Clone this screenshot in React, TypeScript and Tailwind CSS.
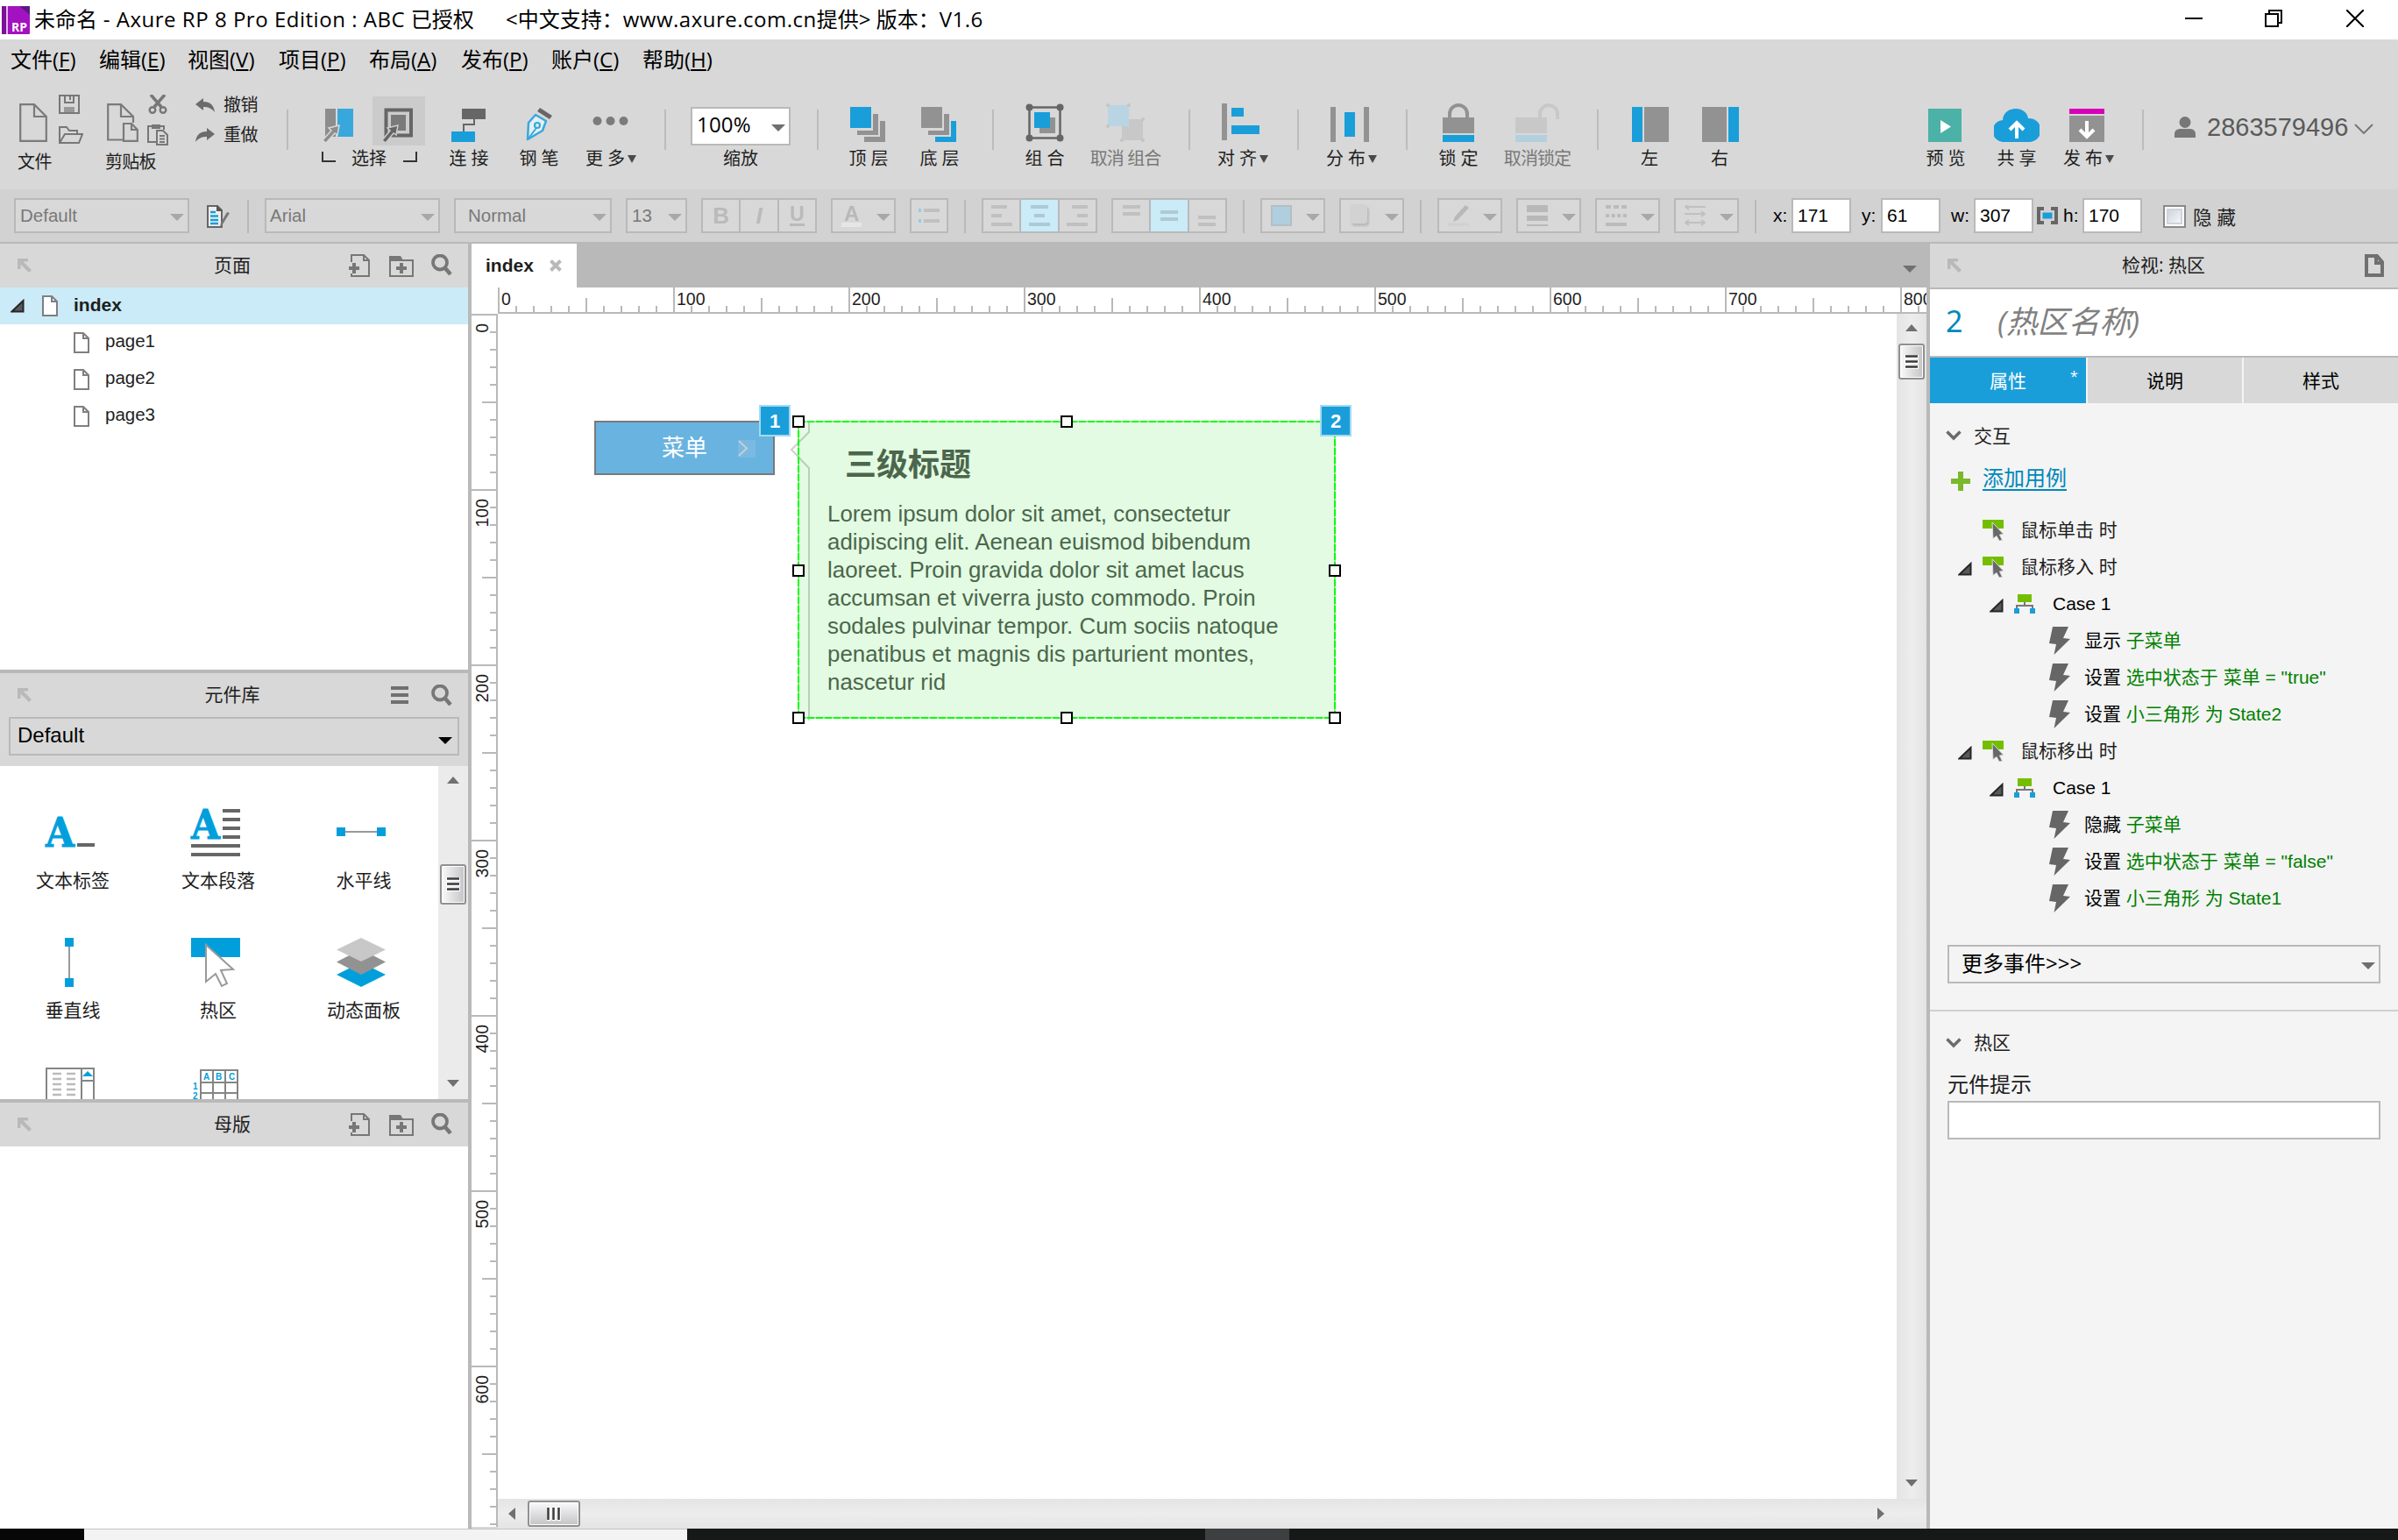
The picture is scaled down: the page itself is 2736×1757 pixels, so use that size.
import type { ReactNode } from 'react';
import clsx from 'clsx';

const LOREM = [
  'Lorem ipsum dolor sit amet, consectetur',
  'adipiscing elit. Aenean euismod bibendum',
  'laoreet. Proin gravida dolor sit amet lacus',
  'accumsan et viverra justo commodo. Proin',
  'sodales pulvinar tempor. Cum sociis natoque',
  'penatibus et magnis dis parturient montes,',
  'nascetur rid',
];

const MENUS = [
  { name: '文件', key: 'F', width: 'w-[101px]' },
  { name: '编辑', key: 'E', width: 'w-[101px]' },
  { name: '视图', key: 'V', width: 'w-[104px]' },
  { name: '项目', key: 'P', width: 'w-[103px]' },
  { name: '布局', key: 'A', width: 'w-[105px]' },
  { name: '发布', key: 'P', width: 'w-[103px]' },
  { name: '账户', key: 'C', width: 'w-[104px]' },
  { name: '帮助', key: 'H', width: 'w-[100px]' },
];

/* ---------- small shared pieces ---------- */

function Caret({ className = 'text-[#a8a8a8]' }: { className?: string }) {
  return (
    <svg className={clsx('h-2 w-4 shrink-0', className)} viewBox="0 0 16 8">
      <path d="M0 0H16L8 8Z" fill="currentColor" />
    </svg>
  );
}

function Divider({ className }: { className?: string }) {
  return <div className={clsx('mt-[30px] h-[46px] w-0.5 shrink-0 bg-[#bcbcbc]', className)} />;
}

function DownMark() {
  return (
    <svg className="mb-[3px] ml-[3px] inline-block h-[9px] w-[10px]" viewBox="0 0 10 9">
      <path d="M0 0H10L5 9Z" fill="#4a4a4a" />
    </svg>
  );
}

interface ToolProps {
  label: string;
  width: string;
  icon: ReactNode;
  disabled?: boolean;
  menu?: boolean;
}

function Tool({ label, width, icon, disabled = false, menu = false }: ToolProps) {
  return (
    <div className={clsx('flex shrink-0 flex-col items-center pt-[23px]', width)}>
      <div className="flex h-11 items-end">{icon}</div>
      <div
        className={clsx(
          'mt-1 h-[30px] text-[20px] leading-[30px] whitespace-nowrap',
          disabled ? 'tracking-[-0.9px] text-[#777]' : 'text-[#1e1e1e]'
        )}
      >
        {label}
        {menu && <DownMark />}
      </div>
    </div>
  );
}

/* ---------- icons ---------- */

function PageIcon() {
  return (
    <svg className="h-6 w-[18px] shrink-0" viewBox="0 0 18 24" fill="#fff" stroke="#7f7f7f" strokeWidth="2">
      <path d="M1 1H11L17 7V23H1Z" />
      <path d="M11 1V7H17" fill="none" />
    </svg>
  );
}

function DockIcon() {
  return (
    <svg className="h-4 w-4 shrink-0" viewBox="0 0 16 16" fill="#b9b9b9">
      <path d="M0 0H12V3.500H6.500L16 13L13 16L3.500 6.500V12H0Z" />
    </svg>
  );
}

function AddPageIcon() {
  return (
    <svg className="h-[26px] w-6" viewBox="0 0 24 26" fill="none" stroke="#777" strokeWidth="2">
      <path d="M3 9V1H17L23 7V25H3V22" />
      <path d="M17 1V7H23" />
      <path d="M0 16H12M6 10V22" strokeWidth="4" />
    </svg>
  );
}

function AddFolderIcon() {
  return (
    <svg className="h-6 w-7" viewBox="0 0 28 24" fill="none" stroke="#777" strokeWidth="2">
      <path d="M1 5H27V23H1Z" />
      <path d="M0 0H13L16 5H0Z" fill="#777" stroke="none" />
      <path d="M8 14H20M14 8V20" strokeWidth="4" />
    </svg>
  );
}

function SearchIcon() {
  return (
    <svg className="h-6 w-6" viewBox="0 0 24 24" fill="none" stroke="#777">
      <circle cx="10" cy="9.500" r="8" strokeWidth="3.800" />
      <path d="M15.500 15.500L22 23" strokeWidth="4.500" />
    </svg>
  );
}

function TreeArrow() {
  return (
    <svg className="h-4 w-4 shrink-0" viewBox="0 0 16 16">
      <path d="M1.500 14.500H14.500V2Z" fill="#595959" stroke="#262626" strokeWidth="2" />
    </svg>
  );
}

function ChevronIcon() {
  return (
    <svg className="h-3 w-[18px] shrink-0" viewBox="0 0 18 12" fill="none" stroke="#6b6b6f" strokeWidth="3.500">
      <path d="M1.500 1.500L9 9L16.500 1.500" />
    </svg>
  );
}

function BoltIcon() {
  return (
    <svg className="h-8 w-6 shrink-0" viewBox="0 0 24 32" fill="#666">
      <path d="M4 0H22L16 13L24 14L5.500 32L8 20L0 19Z" />
    </svg>
  );
}

function EventIcon() {
  return (
    <svg className="h-6 w-6 shrink-0" viewBox="0 0 24 24">
      <path d="M0 0H24V10H0Z" fill="#74be00" />
      <path d="M11 3L24 16.500L19.500 17L22.500 23.500L19 24L16 18.500L12 21.500Z" fill="#686868" stroke="#ddd" strokeWidth="1" />
    </svg>
  );
}

function CaseIcon() {
  return (
    <svg className="h-[22px] w-6 shrink-0" viewBox="0 0 24 22">
      <path d="M12 8V13M3 17V13H21V17" fill="none" stroke="#777" strokeWidth="2" />
      <path d="M4 0H20V9H4Z" fill="#74be00" />
      <path d="M0 16H6V22H0ZM18 16H24V22H18Z" fill="#1a9ed9" />
    </svg>
  );
}

/* ---------- title and menu ---------- */

function TitleBar() {
  return (
    <div className="flex h-[45px] items-center bg-white text-[24px] whitespace-pre text-black">
      <svg className="ml-0.5 h-8 w-8 shrink-0" viewBox="0 0 32 32">
        <rect width="32" height="32" rx="1" fill="#a312c0" />
        <path d="M0 0H5V32H0Z" fill="#7a1296" />
        <path d="M5 0H7V32H5Z" fill="#e7b9f0" />
        <path d="M20 0H32V10Z" fill="#5a1a86" />
        <text x="11" y="28.500" fontSize="15" fontWeight="bold" fill="#fff" fontFamily="Open Sans" textLength="18" lengthAdjust="spacingAndGlyphs">
          RP
        </text>
      </svg>
      <span className="ml-[5px] w-[538px] shrink-0 pb-px">
        未命名<span className="tracking-[0.52px]"> - Axure RP 8 Pro Edition : ABC </span>已授权
      </span>
      <span className="pb-px">
        {'<中文支持：'}
        <span className="tracking-[0.5px]">www.axure.com.cn</span>
        {'提供> 版本：'}
        <span className="tracking-[0.5px]">V1.6</span>
      </span>
      <div className="mr-[39px] mb-1 ml-auto flex items-center">
        <svg className="h-5 w-5" viewBox="0 0 20 20">
          <path d="M0 10H20" stroke="#000" strokeWidth="2" />
        </svg>
        <svg className="ml-[71px] h-5 w-5" viewBox="0 0 20 20" fill="none" stroke="#000" strokeWidth="2">
          <path d="M1 5H15V19H1Z M5 5V1H19V15H15" />
        </svg>
        <svg className="ml-[73px] h-5 w-5" viewBox="0 0 20 20" fill="none" stroke="#000" strokeWidth="2">
          <path d="M0 0L20 20M20 0L0 20" />
        </svg>
      </div>
    </div>
  );
}

function MenuBar() {
  return (
    <div className="flex h-[50px] pl-3 text-[24px] leading-[45px] text-black">
      {MENUS.map((m) => (
        <div key={m.name} className={clsx('shrink-0 whitespace-nowrap', m.width)}>
          {m.name}(<span className="underline underline-offset-2">{m.key}</span>)
        </div>
      ))}
    </div>
  );
}

/* ---------- main toolbar ---------- */

function FileTools() {
  return (
    <>
      <div className="ml-5 w-[100px] shrink-0 pt-[13px]">
        <div className="flex h-[62px]">
          <svg className="mt-[10px] ml-0.5 h-11 w-8" viewBox="0 0 32 44" fill="none" stroke="#7b7b7b" strokeWidth="2.200">
            <path d="M1.200 1.200H17L30.800 15V42.800H1.200Z M17 1.200V15H30.800" />
          </svg>
          <div className="ml-[13px] flex flex-col">
            <svg className="h-[22px] w-6" viewBox="0 0 24 22" fill="none" stroke="#777" strokeWidth="2">
              <path d="M1 1H23V21H1Z M7 1V9H17V1 M13 1V6" />
              <path d="M6 14H18V20H6Z" fill="#999" stroke="none" />
            </svg>
            <svg className="mt-[14px] h-5 w-7" viewBox="0 0 28 20" fill="none" stroke="#777" strokeWidth="2">
              <path d="M1 19V1H9L12 5H21V9 M1 19L7 9H27L23 19Z" />
            </svg>
          </div>
        </div>
        <div className="h-[30px] text-[20px] leading-[30px] tracking-[-0.5px]">文件</div>
      </div>
      <div className="w-[103px] shrink-0 pt-[13px]">
        <div className="flex h-[62px]">
          <svg className="mt-[10px] ml-0.5 h-11 w-9" viewBox="0 0 36 44" fill="none" stroke="#7b7b7b" strokeWidth="2.200">
            <path d="M18 41.500H1.200V1.200H16L30 15V22 M16 1.200V15H30" />
            <path d="M19 23H28L34.800 30V42.800H19Z M28 23V30H34.800" />
          </svg>
          <div className="ml-[10px] flex flex-col">
            <svg className="ml-px h-[22px] w-[22px]" viewBox="0 0 22 22" fill="none" stroke="#777">
              <path d="M3 0L15 14M19 0L7 14" strokeWidth="3.500" />
              <circle cx="5" cy="17.500" r="3.300" strokeWidth="2.400" />
              <circle cx="17" cy="17.500" r="3.300" strokeWidth="2.400" />
            </svg>
            <svg className="mt-3 h-6 w-6" viewBox="0 0 24 24" fill="none" stroke="#777" strokeWidth="2">
              <path d="M10 20H1V2H19V6 M6 1H14V4H6Z" />
              <path d="M11 7H18L23 12V23H11Z M14 13H20M14 16.500H20M14 20H20" />
            </svg>
          </div>
        </div>
        <div className="h-[30px] text-[20px] leading-[30px] tracking-[-0.7px]">剪贴板</div>
      </div>
      <div className="w-[103px] shrink-0 pt-[10px] text-[20px] leading-[30px] tracking-[-0.6px]">
        <div className="flex h-[30px] items-center">
          <svg className="h-4 w-[22px]" viewBox="0 0 22 16" fill="#6b6b6b">
            <path d="M0 7L9 0V4C17 4 21 8 22 16C18 11 14 10 9 10V14Z" />
          </svg>
          <span className="ml-[10px]">撤销</span>
        </div>
        <div className="mt-1 flex h-[30px] items-center">
          <svg className="h-4 w-[22px]" viewBox="0 0 22 16" fill="#6b6b6b">
            <path d="M22 7L13 0V4C5 4 1 8 0 16C4 11 8 10 13 10V14Z" />
          </svg>
          <span className="ml-[10px]">重做</span>
        </div>
      </div>
    </>
  );
}

function SelectTools() {
  return (
    <div className="ml-[38px] w-[118px] shrink-0 pt-[15px]">
      <div className="flex h-14">
        <svg className="mt-[13px] h-10 w-9" viewBox="0 0 36 40">
          <path d="M4 1H16V33H4Z" fill="#8c8c8c" />
          <path d="M18 1H36V33H18Z" fill="#38a8dc" />
          <path d="M20 20L18 31L15 29L5 40L1 37L11 26L8 23Z" fill="#8c8c8c" stroke="#d8d8d8" strokeWidth="1.500" />
        </svg>
        <div className="ml-[22px] flex h-14 w-[60px] bg-[#cbcbcb]">
          <svg className="mt-[13px] ml-[10px] h-10 w-9" viewBox="0 0 36 40">
            <path d="M5.500 2.500H34V31.500H5.500Z" fill="none" stroke="#666" strokeWidth="4" />
            <path d="M11 8H28V26H11Z" fill="#7a7a7a" />
            <path d="M19 20L17 31L14 29L5 40L1 37L10 26L7 23Z" fill="#666" stroke="#cbcbcb" strokeWidth="1.500" />
          </svg>
        </div>
      </div>
      <div className="flex h-[30px] text-[20px] leading-[30px]">
        <div className="mt-[7px] h-3 w-4 border-b-2 border-l-2 border-[#333]" />
        <span className="ml-[18px] w-[59px]">选择</span>
        <div className="mt-[7px] h-3 w-4 border-r-2 border-b-2 border-[#333]" />
      </div>
    </div>
  );
}

function Toolbar() {
  return (
    <div className="flex h-[121px] text-[#1e1e1e]">
      <FileTools />
      <Divider className="ml-px" />
      <SelectTools />
      <Tool
        width="ml-[10px] w-20"
        label="连 接"
        icon={
          <svg className="h-10 w-10" viewBox="0 0 40 40">
            <path d="M26 12V20H14V28" fill="none" stroke="#666" strokeWidth="2" />
            <path d="M12 2H39V14H12Z" fill="#666" />
            <path d="M0 28H27V40H0Z" fill="#1a9ed9" />
          </svg>
        }
      />
      <Tool
        width="w-20"
        label="钢 笔"
        icon={
          <svg className="mb-px h-10 w-8" viewBox="0 0 32 40">
            <path d="M17 2L31 11L28 15L14 6Z" fill="#666" />
            <path d="M3 38L4 19L12 10L24 17L20 28Z" fill="#e4eff4" stroke="#38a8dc" strokeWidth="2.500" strokeLinejoin="round" />
            <path d="M3 38L13 25" stroke="#38a8dc" strokeWidth="2" />
            <circle cx="14" cy="22" r="3" fill="none" stroke="#38a8dc" strokeWidth="2.200" />
          </svg>
        }
      />
      <Tool
        width="w-[84px]"
        label="更 多"
        menu
        icon={
          <svg className="mb-[18px] h-3 w-[42px]" viewBox="0 0 42 12" fill="#7b7b7b">
            <circle cx="5.500" cy="6" r="5" />
            <circle cx="20.500" cy="6" r="5" />
            <circle cx="35.500" cy="6" r="5" />
          </svg>
        }
      />
      <Divider className="ml-[19px]" />
      <div className="ml-7 flex w-[114px] shrink-0 flex-col items-center pt-[27px]">
        <div className="flex h-11 w-full items-center justify-between border-2 border-[#b9b9b9] bg-white pr-1 pl-[5px] text-[24px] text-black">
          <span className="pb-1 tracking-[0.2px]">100%</span>
          <Caret className="mt-1 text-[#6f6f6f]" />
        </div>
        <div className="h-[30px] text-[20px] leading-[30px]">缩放</div>
      </div>
      <Divider className="ml-[30px]" />
      <Tool
        width="ml-4 w-[82px]"
        label="顶 层"
        icon={
          <svg className="mr-0.5 h-10 w-10" viewBox="0 0 40 40" fill="#929292">
            <path d="M26 8H32V32H8V27H26Z M34 16H40V40H16V34H34Z" />
            <path d="M0 0H24V24H0Z" fill="#1a9ed9" />
          </svg>
        }
      />
      <Tool
        width="w-20"
        label="底 层"
        icon={
          <svg className="mr-0.5 h-10 w-10" viewBox="0 0 40 40" fill="#929292">
            <path d="M26 8H32V32H8V27H26Z M0 0H24V24H0Z" />
            <path d="M34 16H40V40H16V34H34Z" fill="#1a9ed9" />
          </svg>
        }
      />
      <Divider className="ml-5" />
      <Tool
        width="ml-[18px] w-20"
        label="组 合"
        icon={
          <svg className="h-11 w-11" viewBox="0 0 44 44">
            <path d="M16 16H34V34H16Z" fill="#929292" />
            <path d="M10 10H28V28H10Z" fill="#1a9ed9" />
            <path d="M4.500 4.500H39.500V39.500H4.500Z" fill="none" stroke="#666" strokeWidth="2.500" />
            <g fill="#666">
              <circle cx="4.500" cy="4.500" r="4" />
              <circle cx="39.500" cy="4.500" r="4" />
              <circle cx="4.500" cy="39.500" r="4" />
              <circle cx="39.500" cy="39.500" r="4" />
            </g>
          </svg>
        }
      />
      <Tool
        width="ml-0.5 w-[100px]"
        label="取消 组合"
        disabled
        icon={
          <svg className="h-11 w-11" viewBox="0 0 44 44">
            <path d="M18 18H42V42H18Z" fill="#c8c8c8" />
            <path d="M2 2H26V26H2Z" fill="#b9d5e3" />
            <g fill="#c5c5c5">
              <circle cx="2" cy="2" r="2" />
              <circle cx="26" cy="2" r="2" />
              <circle cx="2" cy="26" r="2" />
              <circle cx="42" cy="18" r="2" />
              <circle cx="18" cy="42" r="2" />
              <circle cx="42" cy="42" r="2" />
            </g>
          </svg>
        }
      />
      <Divider className="ml-[22px]" />
      <Tool
        width="ml-5 w-20"
        label="对 齐"
        menu
        icon={
          <svg className="mb-0.5 ml-[-6px] h-[42px] w-[43px]" viewBox="0 0 43 42">
            <path d="M0 0H6V42H0Z" fill="#929292" />
            <path d="M11 5H25V15H11Z M11 25H43V35H11Z" fill="#1a9ed9" />
          </svg>
        }
      />
      <Divider className="ml-[22px]" />
      <Tool
        width="ml-5 w-20"
        label="分 布"
        menu
        icon={
          <svg className="mr-1 h-10 w-11" viewBox="0 0 44 40">
            <path d="M0 0H6V40H0Z M38 0H44V40H38Z" fill="#929292" />
            <path d="M16 6H28V34H16Z" fill="#1a9ed9" />
          </svg>
        }
      />
      <Divider className="ml-[22px]" />
      <Tool
        width="ml-[18px] w-20"
        label="锁 定"
        icon={
          <svg className="h-11 w-9" viewBox="0 0 36 44">
            <path d="M8 18V12A10 10 0 0 1 28 12V18" fill="none" stroke="#929292" strokeWidth="4" />
            <path d="M0 16H36V34H0Z" fill="#929292" />
            <path d="M0 36H36V44H0Z" fill="#1a9ed9" />
          </svg>
        }
      />
      <Tool
        width="w-[100px]"
        label="取消锁定"
        disabled
        icon={
          <svg className="h-11 w-[51px]" viewBox="0 0 51 44">
            <path d="M28 18V12A10 10 0 0 1 48 12V18" fill="none" stroke="#c8c8c8" strokeWidth="4" />
            <path d="M0 16H36V34H0Z" fill="#c8c8c8" />
            <path d="M0 36H36V44H0Z" fill="#b3d0de" />
          </svg>
        }
      />
      <Divider className="ml-[18px]" />
      <Tool
        width="ml-[18px] w-20"
        label="左"
        icon={
          <svg className="ml-0.5 h-10 w-[42px]" viewBox="0 0 42 40">
            <path d="M0 0H12V40H0Z" fill="#1a9ed9" />
            <path d="M14 0H42V40H14Z" fill="#929292" />
          </svg>
        }
      />
      <Tool
        width="w-20"
        label="右"
        icon={
          <svg className="ml-0.5 h-10 w-[42px]" viewBox="0 0 42 40">
            <path d="M0 0H28V40H0Z" fill="#929292" />
            <path d="M30 0H42V40H30Z" fill="#1a9ed9" />
          </svg>
        }
      />
      <Tool
        width="ml-[178px] w-20"
        label="预 览"
        icon={
          <svg className="mr-0.5 h-[38px] w-[38px]" viewBox="0 0 38 38">
            <path d="M0 0H38V38H0Z" fill="#4cb1a6" />
            <path d="M14 13V28L26 20.500Z" fill="#fff" />
          </svg>
        }
      />
      <Tool
        width="w-[82px]"
        label="共 享"
        icon={
          <svg className="h-[38px] w-[52px]" viewBox="0 0 52 38">
            <path
              d="M12 38A12.500 12.500 0 0 1 10 13C11 -4 37 -4 39 11A13.500 13.500 0 0 1 41 38Z"
              fill="#1a9ed9"
            />
            <path d="M26 34V17M18 24L26 16L34 24" fill="none" stroke="#fff" strokeWidth="4" />
          </svg>
        }
      />
      <Tool
        width="w-[82px]"
        label="发 布"
        menu
        icon={
          <svg className="mr-1 h-[38px] w-10" viewBox="0 0 40 38">
            <path d="M0 0H40V6H0Z" fill="#d600b8" />
            <path d="M0 8H40V38H0Z" fill="#929292" />
            <path d="M20 14V32M12 24L20 32L28 24" fill="none" stroke="#fff" strokeWidth="4" />
          </svg>
        }
      />
      <Divider className="ml-5" />
      <div className="ml-[35px] flex h-[100px] shrink-0 items-center text-[#5a5a5a]">
        <svg className="h-6 w-6" viewBox="0 0 24 24" fill="#777">
          <ellipse cx="12" cy="6.500" rx="6.500" ry="6.500" />
          <path d="M0 24V20C0 16 3 14 7 14H17C21 14 24 16 24 20V24Z" />
        </svg>
        <span className="ml-[13px] w-[167px] pt-0.5 font-['Liberation_Sans'] text-[29px]">2863579496</span>
        <svg className="mt-1 ml-px h-3 w-[22px]" viewBox="0 0 22 12" fill="none" stroke="#777" strokeWidth="2">
          <path d="M1 1L11 11L21 1" />
        </svg>
      </div>
    </div>
  );
}

/* ---------- format bar ---------- */

interface ComboProps {
  className: string;
  children: ReactNode;
}

function Combo({ className, children }: ComboProps) {
  return (
    <div
      className={clsx(
        'flex h-10 shrink-0 items-center justify-between border-2 border-[#b9b9b9] bg-[#d8d8d8] pr-1 text-[20.500px] text-[#787878]',
        className
      )}
    >
      {children}
      <Caret className="mt-[3px] text-[#a8a8a8]" />
    </div>
  );
}

function FormatDivider({ className }: { className?: string }) {
  return <div className={clsx('mt-0.5 h-[38px] w-0.5 shrink-0 bg-[#b9b9b9]', className)} />;
}

function ButtonGroup({ items, active, className }: { items: ReactNode[]; active?: number; className: string }) {
  return (
    <div className={clsx('flex h-10 w-[132px] shrink-0 divide-x-2 divide-[#b9b9b9] border-2 border-[#b9b9b9]', className)}>
      {items.map((item, i) => (
        <div
          key={i}
          className={clsx(
            'flex flex-1 items-center justify-center border-[#b9b9b9]',
            i === active ? 'bg-[#caebf8]' : 'bg-[#d8d8d8]'
          )}
        >
          {item}
        </div>
      ))}
    </div>
  );
}

function Bars({ d, className = 'text-[#c0c0c0]' }: { d: string; className?: string }) {
  return (
    <svg className={clsx('h-6 w-6', className)} viewBox="0 0 24 24">
      <path d={d} fill="none" stroke="currentColor" strokeWidth="4" />
    </svg>
  );
}

function Coordinate({ label, value, className }: { label: string; value: string; className: string }) {
  return (
    <div className={clsx('flex shrink-0 items-center text-[21px] text-black', className)}>
      <span className="flex-1">{label}</span>
      <div className="flex h-10 w-[68px] items-center border-2 border-[#b9b9b9] bg-white pl-[5px]">{value}</div>
    </div>
  );
}

function FormatBar() {
  return (
    <div className="flex h-[62px] border-b-2 border-[#b9b9b9] bg-[#d2d2d2] pt-[10px] font-['Liberation_Sans','Noto_Sans_CJK_SC',sans-serif]">
      <Combo className="ml-4 w-[200px] pl-[5px]">Default</Combo>
      <svg className="mt-2 ml-5 h-[26px] w-7 shrink-0" viewBox="0 0 28 26">
        <path d="M1 1H12L17 6V25H1Z" fill="#eee" stroke="#666" strokeWidth="2" />
        <path d="M11 0L18 7H11Z" fill="#555" />
        <path d="M4 8H10M4 12.500H13M4 17H13M4 21H13" stroke="#1a9ed9" strokeWidth="2.500" />
        <path d="M26 9L18 22L15 25L16 20L23 8Z" fill="#777" />
      </svg>
      <FormatDivider className="ml-[18px]" />
      <Combo className="ml-[18px] w-[200px] pl-1">Arial</Combo>
      <Combo className="ml-4 w-[180px] pl-[14px]">Normal</Combo>
      <Combo className="ml-4 w-[70px] pl-[5px]">13</Combo>
      <ButtonGroup
        className="ml-4"
        items={[
          <span className="text-[26px] font-bold text-[#bababa]">B</span>,
          <span className="text-[26px] font-bold text-[#bababa] italic">I</span>,
          <span className="border-b-[3px] border-[#bababa] text-[23px] leading-[21px] font-bold text-[#bababa]">U</span>,
        ]}
      />
      <Combo className="ml-4 w-[74px] pl-[10px]">
        <span className="border-b-[5px] border-[#e6e6e6] px-[3px] text-[24px] leading-[20px] font-bold text-[#b8b8b8]">A</span>
      </Combo>
      <div className="ml-4 flex h-10 w-11 shrink-0 items-center justify-center border-2 border-[#b9b9b9] bg-[#d8d8d8]">
        <svg className="h-6 w-6" viewBox="0 0 24 24" strokeWidth="4">
          <path d="M0 6H3M0 18H3" stroke="#93cbe6" />
          <path d="M6 6H24M6 18H24" stroke="#c0c0c0" />
        </svg>
      </div>
      <FormatDivider className="ml-[18px]" />
      <ButtonGroup
        className="ml-[18px]"
        active={1}
        items={[
          <Bars d="M0 2H18M0 12H12M0 22H24" />,
          <Bars d="M2 2H22M6 12H18M0 22H24" className="text-[#afc9d4]" />,
          <Bars d="M6 2H24M12 12H24M0 22H24" />,
        ]}
      />
      <ButtonGroup
        className="ml-4"
        active={1}
        items={[
          <Bars d="M2 2H22M2 10H22" />,
          <Bars d="M2 8H22M2 16H22" className="text-[#afc9d4]" />,
          <Bars d="M2 14H22M2 22H22" />,
        ]}
      />
      <FormatDivider className="ml-[18px]" />
      <Combo className="ml-[18px] w-[74px] pl-[10px]">
        <div className="h-6 w-6 border-2 border-[#b3bfc5] bg-[#b0cfde]" />
      </Combo>
      <Combo className="ml-4 w-[74px] pl-[10px]">
        <div className="mb-1 h-[22px] w-5 rounded-sm bg-[#d2d2d2] shadow-[2px_3px_2px_#bcbcbc]" />
      </Combo>
      <FormatDivider className="ml-[18px]" />
      <Combo className="ml-[18px] w-[74px] pl-[10px]">
        <svg className="h-6 w-6" viewBox="0 0 24 24">
          <path d="M20 0L24 3L11 17L6 19L8 13Z" fill="#b8b8b8" />
          <path d="M0 22H24" stroke="#d0d0d0" strokeWidth="3" />
        </svg>
      </Combo>
      <Combo className="ml-4 w-[74px] pl-[10px]">
        <svg className="h-6 w-6" viewBox="0 0 24 24" fill="#b8b8b8">
          <path d="M0 0H24V8H0Z M0 12H24V18H0Z M0 22H24V24H0Z" />
        </svg>
      </Combo>
      <Combo className="ml-4 w-[74px] pl-[10px]">
        <svg className="h-6 w-6" viewBox="0 0 24 24" stroke="#bbb" strokeWidth="4">
          <path d="M0 2H24" strokeDasharray="6 3" />
          <path d="M0 12H24" strokeDasharray="4 2.600" />
          <path d="M0 22H24" />
        </svg>
      </Combo>
      <Combo className="ml-4 w-[74px] pl-[10px]">
        <svg className="h-6 w-6" viewBox="0 0 24 24" fill="none" stroke="#c0c0c0" strokeWidth="2">
          <path d="M1 2H24M5 -1L1 2L5 5 M0 10H23M19 7L23 10L19 13 M2 20H22M5 17L1 20L5 23M19 17L23 20L19 23" />
        </svg>
      </Combo>
      <FormatDivider className="ml-[18px]" />
      <Coordinate label="x:" value="171" className="-mt-[10px] ml-[19px] w-[89px]" />
      <Coordinate label="y:" value="61" className="-mt-[10px] ml-3 w-[90px]" />
      <Coordinate label="w:" value="307" className="-mt-[10px] ml-3 w-[94px]" />
      <svg className="mt-[10px] ml-1 h-5 w-6 shrink-0" viewBox="0 0 24 20">
        <path d="M8 2H2V18H8M16 2H22V18H16" fill="none" stroke="#666" strokeWidth="4" />
        <path d="M6 6H18V14H6Z" fill="#1a9ed9" stroke="#d2d2d2" />
      </svg>
      <Coordinate label="h:" value="170" className="-mt-[10px] ml-[6px] w-[90px]" />
      <div className="mt-2 ml-6 h-[26px] w-[26px] shrink-0 border-2 border-[#8a8a8a] bg-white p-0.5">
        <div className="h-full w-full border-2 border-[#cfd3da] bg-gradient-to-br from-[#cfd4de] to-[#f5f6f8]" />
      </div>
      <span className="mt-2 ml-2 text-[21.500px] leading-[30px] whitespace-nowrap text-[#1e1e1e]">隐 藏</span>
    </div>
  );
}

/* ---------- left side panels ---------- */

function PanelHeader({ title, children }: { title: string; children: ReactNode }) {
  return (
    <div className="grid h-[50px] shrink-0 grid-cols-[1fr_auto_1fr] items-center bg-[#d8d8d8] pr-[18px] pl-5">
      <DockIcon />
      <span className="mr-[6px] pb-0.5 text-[21px] leading-[30px] text-[#1e1e1e]">{title}</span>
      <div className="flex items-center justify-end">{children}</div>
    </div>
  );
}

function PageActions() {
  return (
    <div className="flex items-end gap-[22px]">
      <AddPageIcon />
      <AddFolderIcon />
      <div className="-ml-0.5 pb-0.5">
        <SearchIcon />
      </div>
    </div>
  );
}

function PagesPanel() {
  return (
    <div className="flex h-[490px] shrink-0 flex-col border-b-4 border-[#b9b9b9] bg-white">
      <PanelHeader title="页面">
        <PageActions />
      </PanelHeader>
      <div className="flex h-[42px] items-center bg-[#caebf7] pl-3 font-['Liberation_Sans'] text-[21px] text-[#1e1e1e]">
        <TreeArrow />
        <div className="ml-5">
          <PageIcon />
        </div>
        <span className="ml-[18px] pb-[3px] font-bold">index</span>
      </div>
      {['page1', 'page2', 'page3'].map((page) => (
        <div key={page} className="flex h-[42px] items-center pl-[84px] font-['Liberation_Sans'] text-[20.500px] text-[#1e1e1e]">
          <PageIcon />
          <span className="ml-[18px] pb-[3px]">{page}</span>
        </div>
      ))}
    </div>
  );
}

function ScrollGrip({ vertical = false, className }: { vertical?: boolean; className?: string }) {
  return (
    <div
      className={clsx(
        'flex items-center justify-center rounded-[3px] border-2 border-[#909090] ring-1 ring-white ring-inset',
        vertical
          ? 'w-[30px] bg-gradient-to-r from-[#fafafa] to-[#c4c4c8]'
          : 'h-[30px] bg-gradient-to-b from-[#fafafa] to-[#c4c4c8]',
        className
      )}
    >
      <svg className={clsx('h-4 w-4', vertical && 'rotate-90')} viewBox="0 0 16 16">
        <path d="M2 0V16M8 0V16M14 0V16" stroke="#fff" strokeWidth="5" />
        <path d="M1.500 1V15M7.500 1V15M13.500 1V15" stroke="#3a3a3a" strokeWidth="2.500" />
      </svg>
    </div>
  );
}

function ScrollArrow({ className }: { className: string }) {
  return (
    <svg className={clsx('h-2 w-[14px]', className)} viewBox="0 0 14 8">
      <path d="M0 0H14L7 8Z" fill="#707070" />
    </svg>
  );
}

interface WidgetProps {
  label?: string;
  children: ReactNode;
}

function Widget({ label, children }: WidgetProps) {
  return (
    <div className="flex h-[148px] w-[166px] flex-col items-center">
      <svg className="mr-[6px] h-14 w-14 overflow-visible" viewBox="0 0 56 56">
        {children}
      </svg>
      <span className="mt-[11px] text-[21px] leading-[30px] whitespace-nowrap text-[#1e1e1e]">{label}</span>
    </div>
  );
}

// Heavy serif capital of the two text widgets
function LetterA({ y }: { y: number }) {
  return (
    <text
      x="0"
      y={y}
      fontSize="46"
      fontWeight="bold"
      fontFamily="DejaVu Serif"
      fill="#009fdc"
      stroke="#009fdc"
      strokeWidth="1"
      textLength="33"
      lengthAdjust="spacingAndGlyphs"
    >
      A
    </text>
  );
}

function LibraryPanel() {
  return (
    <div className="flex h-[490px] shrink-0 flex-col overflow-hidden border-b-4 border-[#b9b9b9] bg-white">
      <PanelHeader title="元件库">
        <svg className="h-5 w-5" viewBox="0 0 20 20">
          <path d="M0 2H20M0 10H20M0 18H20" stroke="#707070" strokeWidth="4" />
        </svg>
        <div className="ml-[26px]">
          <SearchIcon />
        </div>
      </PanelHeader>
      <div className="h-14 shrink-0 bg-[#d8d8d8] px-[10px]">
        <div className="flex h-11 items-center justify-between border-2 border-[#b9b9b9] pr-[6px] pl-2 font-['Liberation_Sans'] text-[24px] text-black">
          <span className="pb-[3px]">Default</span>
          <Caret className="mt-[9px] text-black" />
        </div>
      </div>
      <div className="flex h-[380px] shrink-0">
        <div className="flex w-[500px] flex-wrap content-start overflow-hidden pt-12">
          <Widget label="文本标签">
            <LetterA y={44} />
            <path d="M36 42H56" stroke="#666" strokeWidth="4" />
          </Widget>
          <Widget label="文本段落">
            <LetterA y={35} />
            <path d="M36 3H56M36 13H56M36 23H56M36 33H56M0 43H56M0 53H56" stroke="#666" strokeWidth="3.800" />
          </Widget>
          <Widget label="水平线">
            <path d="M5 27H51" stroke="#999" strokeWidth="2" />
            <path d="M0 22H10V32H0Z M46 22H56V32H46Z" fill="#009fdc" />
          </Widget>
          <Widget label="垂直线">
            <path d="M27 5V51" stroke="#999" strokeWidth="2" />
            <path d="M22 0H32V10H22Z M22 46H32V56H22Z" fill="#009fdc" />
          </Widget>
          <Widget label="热区">
            <path d="M0 0H56V22H0Z" fill="#009fdc" />
            <path d="M17 8L48 36L34 37L41 52L35 55L28 41L17 50Z" fill="#fff" stroke="#999" strokeWidth="2" />
          </Widget>
          <Widget label="动态面板">
            <path d="M28 28L56 42L28 56L0 42Z" fill="#009fdc" />
            <path d="M28 13L56 27.500L28 42L0 27.500Z" fill="#929292" />
            <path d="M28 0L56 13.500L28 27L0 13.500Z" fill="#c8c8c8" />
          </Widget>
          <Widget>
            <path d="M1 1H55V60H1Z M41 1V60M41 15H55" fill="#fff" stroke="#858585" strokeWidth="2" />
            <path d="M8 7H18M24 7H34M8 13H18M24 13H34M8 19H18M24 19H34M8 25H18M24 25H34M8 31H18M24 31H34" stroke="#bbb" strokeWidth="2.500" />
            <path d="M42 10L48 4L54 10Z" fill="#009fdc" />
          </Widget>
          <Widget>
            <path d="M11 3H53V60H11Z M25 3V60M39 3V60M11 17H53M11 29H53" fill="#fff" stroke="#858585" strokeWidth="2" />
            <g fill="#009fdc" fontSize="10" fontWeight="bold" fontFamily="Liberation Sans">
              <text x="14" y="14">A</text>
              <text x="28" y="14">B</text>
              <text x="43" y="14">C</text>
              <text x="2" y="25">1</text>
              <text x="2" y="36">2</text>
            </g>
          </Widget>
        </div>
        <div className="flex w-[34px] flex-col items-center bg-[#ebebeb]">
          <ScrollArrow className="mt-3 rotate-180" />
          <ScrollGrip vertical className="mt-[92px] h-[46px]" />
          <ScrollArrow className="mt-[200px]" />
        </div>
      </div>
    </div>
  );
}

/* ---------- design area ---------- */

// Two screen pixels stand for one unit of the design
const TICKS = Array.from({ length: 90 }, (_, i) => i);

function HorizontalRuler() {
  return (
    <svg className="h-[30px] w-[1630px] shrink-0 bg-white" viewBox="0 0 1630 30">
      <path d="M0 29H1630" stroke="#b9b9b9" strokeWidth="2" />
      {TICKS.map((i) => {
        const top = i % 10 === 0 ? 0 : i % 5 === 0 ? 12 : 21;
        return <path key={i} d={`M${i * 20 + 1} ${top}V30`} stroke="#b9b9b9" strokeWidth="2" />;
      })}
      {TICKS.filter((i) => i % 10 === 0).map((i) => (
        <text key={i} x={i * 20 + 4} y="19.500" fontSize="19.500" fontFamily="Liberation Sans" fill="#1e1e1e">
          {i * 10}
        </text>
      ))}
    </svg>
  );
}

function VerticalRuler() {
  return (
    <svg className="h-[1384px] w-[30px] shrink-0 bg-white" viewBox="0 0 30 1384">
      <path d="M29 0V1384" stroke="#b9b9b9" strokeWidth="2" />
      {TICKS.filter((i) => i < 70).map((i) => {
        const left = i % 10 === 0 ? 0 : i % 5 === 0 ? 12 : 21;
        return <path key={i} d={`M${left} ${i * 20 + 1}H30`} stroke="#b9b9b9" strokeWidth="2" />;
      })}
      {TICKS.filter((i) => i % 10 === 0 && i < 70).map((i) => (
        <text
          key={i}
          transform={`translate(19 ${i * 20 + 11}) rotate(-90)`}
          textAnchor="end"
          fontSize="19.500"
          fontFamily="Liberation Sans"
          fill="#1e1e1e"
        >
          {i * 10}
        </text>
      ))}
    </svg>
  );
}

const HANDLES = [
  [336, 116],
  [642, 116],
  [336, 286],
  [948, 286],
  [336, 454],
  [642, 454],
  [948, 454],
];

function Badge({ value, className }: { value: string; className: string }) {
  return (
    <div
      className={clsx(
        "absolute top-[104px] flex h-9 w-9 items-center justify-center border-2 border-[#a3daf1] bg-[#1a9ed9] font-['Liberation_Sans'] text-[22px] font-bold text-white",
        className
      )}
    >
      {value}
    </div>
  );
}

function Canvas() {
  return (
    <div className="relative h-[1352px] w-[1596px] shrink-0 overflow-hidden bg-white">
      <div className="absolute top-[122px] left-[110px] flex h-[62px] w-[206px] items-center justify-center border-2 border-[#797979] bg-[#69b3e0] text-[26px] text-white">
        <span className="pb-px">菜单</span>
      </div>
      <svg className="absolute top-[144px] left-[274px] h-5 w-5" viewBox="0 0 20 20">
        <path d="M0 0H20V20H0Z" fill="#7abae2" />
        <path d="M1 1L10 9.500L1 18" fill="none" stroke="#c9cdd0" strokeWidth="2" />
      </svg>
      <Badge value="1" className="left-[298px]" />

      <svg className="absolute top-[122px] left-[334px] h-[344px] w-[624px]" viewBox="0 0 624 344">
        <path d="M21 0V13L1 33L21 54V342" fill="none" stroke="#cfcfcf" strokeWidth="2" />
        <path d="M8 0H622V340H8Z" fill="#00d800" fillOpacity="0.115" />
        <path d="M9 1H621V339H9Z" fill="none" stroke="#b5d8b5" strokeWidth="2" />
        <path d="M9 1H621M9 339H621M9 1V339M621 1V339" fill="none" stroke="#00ff00" strokeWidth="2" strokeDasharray="8 2" />
      </svg>
      <div className="absolute top-[145px] left-[396px] text-[36px] leading-[54px] font-bold whitespace-nowrap text-[#4c664c]">
        三级标题
      </div>
      <div className="absolute top-[212px] left-[376px] font-['Liberation_Sans'] text-[25.870px] leading-8 whitespace-nowrap text-[#4c664c]">
        {LOREM.map((line) => (
          <div key={line}>{line}</div>
        ))}
      </div>
      {HANDLES.map(([left, top]) => (
        <div key={`${left}-${top}`} className="absolute h-[14px] w-[14px] border-2 border-black bg-[#fafffa]" style={{ left, top }} />
      ))}
      <Badge value="2" className="left-[938px]" />
    </div>
  );
}

function DesignArea() {
  return (
    <div className="flex w-[1660px] shrink-0 flex-col">
      <div className="flex h-[50px] shrink-0 items-center justify-between bg-[#b9b9b9] pr-[11px]">
        <div className="flex h-full w-[120px] items-center bg-white pl-4">
          <span className="w-[73px] font-['Liberation_Sans'] text-[21px] font-bold text-[#1e1e1e]">index</span>
          <svg className="h-[14px] w-[14px]" viewBox="0 0 14 14">
            <path d="M1.500 1.500L12.500 12.500M12.500 1.500L1.500 12.500" stroke="#b9b9b9" strokeWidth="4" />
          </svg>
        </div>
        <Caret className="mt-2 text-[#707070]" />
      </div>
      <div className="flex">
        <div className="h-[30px] w-[30px] shrink-0 bg-white" />
        <HorizontalRuler />
      </div>
      <div className="flex">
        <VerticalRuler />
        <div>
          <div className="flex">
            <Canvas />
            <div className="flex h-[1352px] w-[34px] flex-col items-center bg-gradient-to-r from-[#e4e4e4] via-[#ededed] to-[#e4e4e4]">
              <ScrollArrow className="mt-3 rotate-180" />
              <ScrollGrip vertical className="mt-[14px] h-[41px]" />
              <ScrollArrow className="mt-auto mb-[14px]" />
            </div>
          </div>
          <div className="flex h-[34px] items-center bg-gradient-to-b from-[#e4e4e4] via-[#ededed] to-[#e4e4e4]">
            <ScrollArrow className="ml-[9px] rotate-90" />
            <ScrollGrip className="ml-[11px] w-[60px]" />
            <ScrollArrow className="mr-[45px] ml-auto -rotate-90" />
          </div>
        </div>
      </div>
      <div className="h-0.5 w-[30px] bg-[#b9b9b9]" />
    </div>
  );
}

/* ---------- inspector ---------- */

function EventRow({ name, open = false }: { name: string; open?: boolean }) {
  return (
    <div className="flex h-[42px] items-center pl-8">
      <div className="mt-[3px] w-7">{open && <TreeArrow />}</div>
      <div className="-mt-px">
        <EventIcon />
      </div>
      <span className="ml-[19px] pb-px">{name}</span>
    </div>
  );
}

function CaseRow({ name }: { name: string }) {
  return (
    <div className="flex h-[42px] items-center pl-[68px]">
      <div className="mt-[3px] w-7">
        <TreeArrow />
      </div>
      <CaseIcon />
      <span className="ml-5 text-black">{name}</span>
    </div>
  );
}

function ActionRow({ verb, target }: { verb: string; target: string }) {
  return (
    <div className="flex h-[42px] items-center pl-[136px]">
      <BoltIcon />
      <span className="ml-4 pb-px text-black">
        {verb} <span className="text-[#008000]">{target}</span>
      </span>
    </div>
  );
}

function Inspector() {
  return (
    <div className="flex w-[534px] shrink-0 flex-col bg-[#f4f4f4] text-[21px] leading-[30px] text-[#1e1e1e]">
      <div className="grid h-[52px] grid-cols-[1fr_auto_1fr] items-center border-b-2 border-[#b9b9b9] bg-[#d8d8d8] pr-4 pl-5">
        <DockIcon />
        <span className="mr-[5px] pb-0.5">检视: 热区</span>
        <svg className="ml-auto h-[26px] w-[22px]" viewBox="0 0 22 26">
          <path d="M2 2H14L20 9V24H2Z M13 2V10H20" fill="none" stroke="#707070" strokeWidth="4" />
        </svg>
      </div>
      <div className="flex h-[78px] items-center border-b-2 border-[#b9b9b9] bg-white pb-1">
        <span className="ml-[18px] w-[59px] font-['Noto_Sans'] text-[34px] text-[#0088bb]">2</span>
        <span className="text-[35.500px] text-[#808080] italic">(热区名称)</span>
      </div>
      <div className="flex h-[52px] gap-0.5 text-center leading-[52px] text-black">
        <div className="flex w-[178px] bg-[#1a9ed9] text-white">
          <span className="w-full">属性</span>
          <span className="-ml-[18px] w-[18px] -translate-y-[5px] text-left text-[16px]">*</span>
        </div>
        <div className="w-[176px] bg-[#d8d8d8]">说明</div>
        <div className="w-[176px] bg-[#d8d8d8]">样式</div>
      </div>

      <div className="mt-[21px] flex h-8 items-center pl-[18px]">
        <ChevronIcon />
        <span className="ml-[14px]">交互</span>
      </div>
      <div className="mt-4 flex h-9 items-center pl-6">
        <svg className="mt-1 h-[22px] w-[22px]" viewBox="0 0 22 22">
          <path d="M0 11H22M11 0V22" stroke="#7ab82c" strokeWidth="6" />
        </svg>
        <span className="ml-[14px] pb-1 text-[24px] text-[#0088bb] underline underline-offset-4">添加用例</span>
      </div>
      <div className="mt-[19px] font-['Liberation_Sans','Noto_Sans_CJK_SC',sans-serif]">
        <EventRow name="鼠标单击 时" />
        <EventRow name="鼠标移入 时" open />
        <CaseRow name="Case 1" />
        <ActionRow verb="显示" target="子菜单" />
        <ActionRow verb="设置" target={'选中状态于 菜单 = "true"'} />
        <ActionRow verb="设置" target="小三角形 为 State2" />
        <EventRow name="鼠标移出 时" open />
        <CaseRow name="Case 1" />
        <ActionRow verb="隐藏" target="子菜单" />
        <ActionRow verb="设置" target={'选中状态于 菜单 = "false"'} />
        <ActionRow verb="设置" target="小三角形 为 State1" />
      </div>
      <div className="mt-8 ml-5 flex h-11 w-[494px] items-center justify-between border-2 border-[#b9b9b9] pr-1 pl-[14px] text-[24px] text-black">
        <span className="pb-[3px]">更多事件&gt;&gt;&gt;</span>
        <Caret className="mt-1 text-[#6f6f6f]" />
      </div>

      <div className="mt-[30px] flex h-[55px] items-end border-t-2 border-[#cfcfcf] pb-[3px] pl-[18px]">
        <div className="mb-2">
          <ChevronIcon />
        </div>
        <span className="ml-[14px]">热区</span>
      </div>
      <div className="mt-[15px] ml-5 h-[34px] text-[24px]">元件提示</div>
      <div className="ml-5 h-11 w-[494px] border-2 border-[#b9b9b9] bg-white" />
    </div>
  );
}

export default function App() {
  return (
    <div className="h-[1757px] w-[2736px] overflow-hidden bg-[#d8d8d8] font-['Open_Sans','Noto_Sans_CJK_SC',sans-serif]">
      <TitleBar />
      <MenuBar />
      <Toolbar />
      <FormatBar />
      <div className="flex h-[1466px]">
        <div className="flex w-[538px] shrink-0 flex-col border-r-4 border-[#b9b9b9] bg-white">
          <PagesPanel />
          <LibraryPanel />
          <PanelHeader title="母版">
            <PageActions />
          </PanelHeader>
        </div>
        <DesignArea />
        <div className="w-1 shrink-0 bg-[#b9b9b9]" />
        <Inspector />
      </div>
      <div className="flex h-[13px] bg-[#171919]">
        <div className="w-24 bg-[#070707]" />
        <div className="w-[688px] border-t border-[#c4c4c4] bg-[#f3f3f3]" />
        <div className="ml-[591px] w-24 bg-[#3d3f40]" />
      </div>
    </div>
  );
}
